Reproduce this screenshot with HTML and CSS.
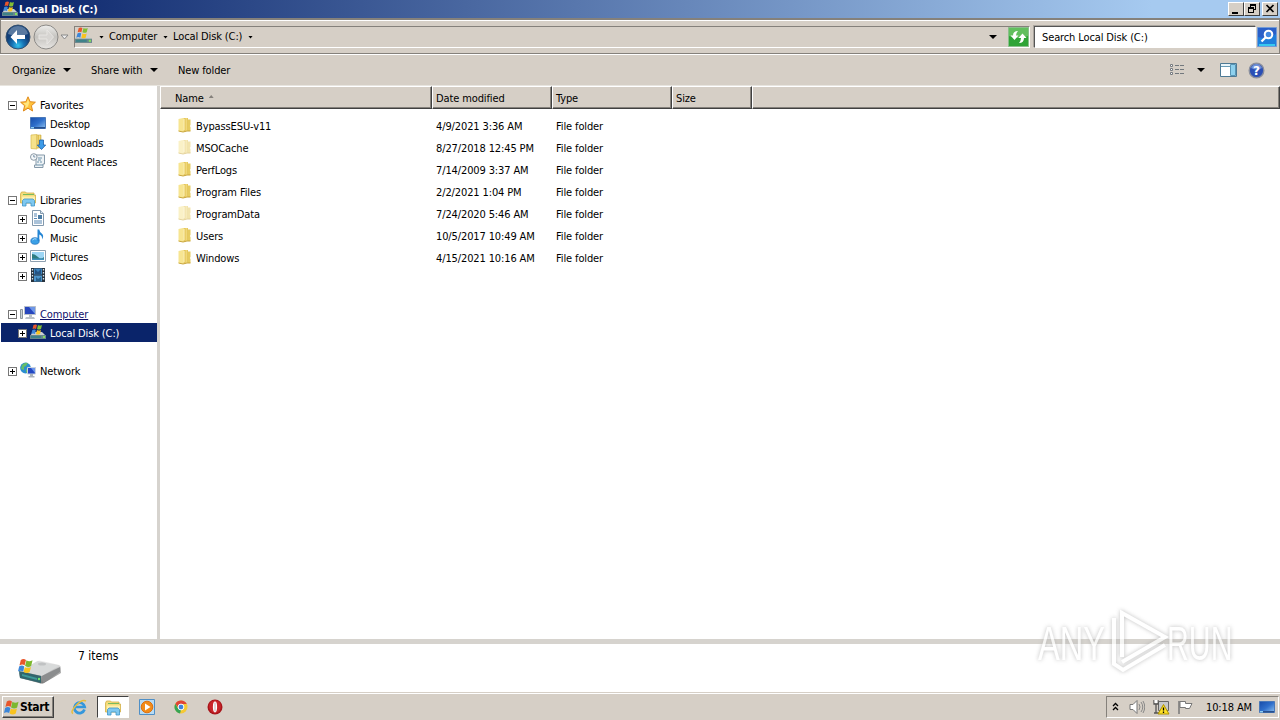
FILE: index.html
```html
<!DOCTYPE html>
<html lang="en">
<head>
    <meta charset="UTF-8">
    <title>Local Disk (C:)</title>
    <link rel="stylesheet" href="styles.css">
</head>
<body>
    <!-- shared icons -->
    <svg class="defs" width="0" height="0">
        <defs>
            <linearGradient id="gold" x2="1"><stop offset="0" stop-color="#f8e9a0"/><stop offset=".45" stop-color="#dcb63f"/><stop offset=".55" stop-color="#f7e48f"/><stop offset="1" stop-color="#e0c050"/></linearGradient>
            <linearGradient id="screen" x2="1" y2="1"><stop offset="0" stop-color="#174ba8"/><stop offset=".5" stop-color="#2f6fcb"/><stop offset="1" stop-color="#8fc2f0"/></linearGradient>
            <linearGradient id="metal" x2="0" y2="1"><stop offset="0" stop-color="#f2f2f2"/><stop offset="1" stop-color="#777"/></linearGradient>
            <radialGradient id="orb" cy=".85"><stop offset="0" stop-color="#35c4ee"/><stop offset=".5" stop-color="#1672b4"/><stop offset="1" stop-color="#123f78"/></radialGradient>
            <linearGradient id="orbOff" x2="0" y2="1"><stop offset="0" stop-color="#eeeeec"/><stop offset=".5" stop-color="#c5c3bf"/><stop offset="1" stop-color="#e8e6e3"/></linearGradient>
        </defs>
        <symbol id="flag" viewBox="0 0 16 16">
            <path d="M3 2q3-2 5.500 0L7 8Q5 6 1.500 8z" fill="#e8562a"/>
            <path d="M9 2.500q3 2 6.500 0L14 8.500q-3 2-6.500 0z" fill="#7cb82f"/>
            <path d="M1.200 9Q4 7 6.800 9l-1.300 5.500Q3 12.500 0 14.500z" fill="#3c86d8"/>
            <path d="M7.300 9.500q3 2 6.500 0L12.500 15q-3 2-6.500 0z" fill="#f9c31f"/>
        </symbol>
        <symbol id="drive" viewBox="0 0 16 16">
            <path d="M3 8h9l4 4H0z" fill="#c9cfd1"/>
            <path d="M0 11h16v4H0z" fill="#68868c"/>
            <path d="M1 12h10v2H1z" fill="#3d8289"/>
            <path d="M13 12h2v2h-2z" fill="#83df5c"/>
            <path d="M3.500 1q2-1 3.500 0L6 5Q4.500 4 2.500 5z" fill="#e8562a"/>
            <path d="M8 1q2 1 4 0l-1 4Q9 6 7 5z" fill="#83bf34"/>
            <path d="M2.300 6q2-1 3.500 0L5 10Q3 9 1.200 10z" fill="#3c86d8"/>
            <path d="M7 6q2 1 4 0l-1 4q-2 1-4 0z" fill="#f9c31f"/>
        </symbol>
        <symbol id="folder" viewBox="0 0 16 16">
            <path d="M1.500 2L6 1v14l-4.500-1z" fill="#f7e591"/>
            <path d="M6 1h5v12.500L6 15z" fill="url(#gold)"/>
            <path d="M11 2.500h2.500V8l-.7 1 .7 1v4H9.500l1.500-1z" fill="#e6cb60"/>
            <path d="M1.500 14L6 15l4-1h3.500" fill="none" stroke="#c9a53a"/>
            <path d="M7 2v11" stroke="#fff5bd"/>
        </symbol>
        <symbol id="star" viewBox="0 0 16 16">
            <path d="M8 .8l2.100 4.900 5.300.5-4 3.500 1.200 5.300L8 12.200 3.400 15l1.200-5.300-4-3.500 5.300-.5z" fill="#ffc23c" stroke="#e08a1c"/>
            <path d="M8 3l1.200 3.400-1.200 4-3 1.800.8-2.800L3 7l3.600-.3z" fill="#ffe680"/>
        </symbol>
        <symbol id="desktop" viewBox="0 0 16 16">
            <path d="M.5 2.500h15v11H.5z" fill="url(#screen)" stroke="#4a78b8"/>
            <path d="M1 12h14v1.500H1z" fill="#274f8d"/>
            <path d="M1 12h3v1.500H1z" fill="#8ccdf5"/>
        </symbol>
        <symbol id="downloads" viewBox="0 0 16 16">
            <path d="M1 1l6-.5V15l-6-.5z" fill="#f6e28b" stroke="#d7b94f" stroke-width=".7"/>
            <path d="M7 1h4v13H7z" fill="url(#gold)" stroke="#cfac42" stroke-width=".6"/>
            <path d="M9.500 6h4v5h2.200L11.500 15.500 7.300 11h2.200z" fill="#3c9be8" stroke="#1c5ea8" stroke-width=".8"/>
        </symbol>
        <symbol id="recent" viewBox="0 0 16 16">
            <path d="M5 2h9.500v9H13v3.500H4.500V12H6V5z" fill="#edf2f5" stroke="#8598a8"/>
            <path d="M8 5h4M8 7h3M7 9h2M10 9h2M6 12h7" stroke="#6f93ab"/>
            <circle cx="3.800" cy="4" r="3.300" fill="#f5f8fa" stroke="#8c9aa6"/>
            <path d="M3.800 2v2h1.500" fill="none" stroke="#587894" stroke-width=".8"/>
        </symbol>
        <symbol id="libraries" viewBox="0 0 16 16">
            <path d="M.5 3l1-2h4l1 1h7.500v2h1.500v8H.5z" fill="#f5dc7b" stroke="#d2ae49" stroke-width=".8"/>
            <path d="M3 3.500h11" stroke="#78bb60"/>
            <path d="M2 5.500h13v4H2z" fill="#fff0ad"/>
            <path d="M2.500 15V9.500L4 8h9l1.500 1.500V15h-3.500v-3H6v3z" fill="#7fc8f0" stroke="#3f94c8" stroke-width=".8"/>
        </symbol>
        <symbol id="documents" viewBox="0 0 16 16">
            <path d="M2.500.5h8l3 3v12h-11z" fill="#fff" stroke="#8399ad"/>
            <path d="M10.500.5v3h3" fill="#dce8f2" stroke="#8399ad"/>
            <path d="M4 4h3M4 6h3M4 8.500h3M4 11h8M4 13h8" stroke="#5686b3"/>
            <path d="M8 5h4v4H8z" fill="#4c7da5"/>
        </symbol>
        <symbol id="music" viewBox="0 0 16 16">
            <ellipse cx="5" cy="12" rx="4.200" ry="3.300" fill="#3ba0e6" stroke="#1c6db8" stroke-width=".7"/>
            <path d="M7.500 12V.5h1.700q.5 3 3 4.500 2 2-.2 5.500Q12.500 6.500 9.300 5.500V12z" fill="#2586d4"/>
            <path d="M2.500 11q1.500-2 4-1" stroke="#b0e0ff" fill="none"/>
        </symbol>
        <symbol id="pictures" viewBox="0 0 16 16">
            <path d="M.5 2.500h15v11H.5z" fill="#fff" stroke="#8ea0b0"/>
            <path d="M2 4h12v8H2z" fill="#9dd6f5"/>
            <path d="M2 6q3 0 6 3t6 0v3H2z" fill="#2e7d80"/>
            <path d="M2 10.500h12V12H2z" fill="#4092bf"/>
        </symbol>
        <symbol id="videos" viewBox="0 0 16 16">
            <path d="M1 1h14v14H1z" fill="#27333f"/>
            <path d="M4 1.500h8v6H4z" fill="#3b83be"/><path d="M4 8.500h8v6H4z" fill="#4d95cb"/>
            <path d="M5 2l3 3 3-3v5H5z" fill="#245382"/><path d="M6 10l2 2 3-2v4H6z" fill="#26618d"/>
            <path d="M2.500 2v12M13.500 2v12" stroke="#dbe8ef" stroke-width="1.300" stroke-dasharray="1.500 1.500"/>
        </symbol>
        <symbol id="computer" viewBox="0 0 16 16">
            <path d="M.5 4.500h2v9h-2z" fill="#ccd3d8" stroke="#8b959c"/>
            <path d="M4.500 1.500h11v8h-11z" fill="#2746bd" stroke="#b7bfca"/>
            <path d="M9 2h6v7z" fill="#6d96e8"/>
            <path d="M9 10h3v2H9zM6 12h8l1 2H5z" fill="#bac1c8"/>
        </symbol>
        <symbol id="network" viewBox="0 0 16 16">
            <circle cx="5.500" cy="6" r="5.400" fill="#2b8ed0"/>
            <path d="M2 3q3-3 6-2L6 4 4 5v3L1 7zM6 7l3 1-3 3z" fill="#65bd68"/>
            <path d="M7.500 5.500h8v6.500h-8z" fill="#2348c3" stroke="#cad2de"/>
            <path d="M11 6h4v5z" fill="#6b95eb"/>
            <path d="M10 12h3v2h-3zM8.500 14h6v1.500h-6z" fill="#a9b2bb"/>
        </symbol>
    </svg>

    <div class="window">
        <div class="titlebar">
            <svg class="icon"><use href="#drive"/></svg>
            <span class="title">Local Disk (C:)</span>
            <div class="controls">
                <button><svg width="14" height="12"><path d="M3 9h6v2H3z"/></svg></button>
                <button><svg width="14" height="12"><path d="M5 1h6v6H9V6h1V3H6v1H5zM3 4h6v6H3zM4 6v3h4V6z" fill-rule="evenodd"/></svg></button>
                <button class="close"><svg width="14" height="12"><path d="M3.500 2l7 7M10.500 2l-7 7" stroke="#000" stroke-width="1.700"/></svg></button>
            </div>
        </div>

        <div class="addressbar">
            <svg class="orb" viewBox="0 0 26 26">
                <circle cx="13" cy="13" r="12" fill="url(#orb)" stroke="#36516e"/>
                <path d="M3 10q2-8 10-8t10 8q-10 4-20 0z" fill="#fff" opacity=".3"/>
                <path d="M12 6L5.500 13l6.500 7v-5h8v-4h-8z" fill="#fff"/>
            </svg>
            <svg class="orb" viewBox="0 0 26 26">
                <circle cx="13" cy="13" r="12" fill="url(#orbOff)" stroke="#8c8a87"/>
                <path d="M14 6l6.500 7-6.500 7v-5H6v-4h8z" fill="#d7d5d2" stroke="#e8e6e3"/>
            </svg>
            <svg class="history" width="9" height="6"><path d="M1 1h7L4.500 5z" fill="#eee" stroke="#888"/></svg>
            <div class="breadcrumb">
                <svg class="drive"><use href="#drive"/></svg>
                <i class="caret small"></i><span class="crumb-computer">Computer</span>
                <i class="caret small"></i><span class="crumb-disk">Local Disk (C:)</span>
                <i class="caret small"></i>
                <i class="caret dropdown"></i>
                <svg class="refresh" viewBox="0 0 21 20">
                    <path d="M.5.5h20v19H.5z" fill="#2fa436" stroke="#8bbf8c"/>
                    <path d="M1 1h19v8q-9 4-19 0z" fill="#62bf5e"/>
                    <path d="M6.500 13L2.500 8.500H5Q5 4 10 4 8 6 8 8.500h2.500zM14.500 6.500l4 4.500H16q0 5-5 5 2-2.500 2-5h-2.500z" fill="#fff"/>
                </svg>
            </div>
            <div class="search">Search Local Disk (C:)</div>
            <svg class="search-button" viewBox="0 0 20 20">
                <path d="M.5.5h19v19H.5z" fill="#2a5fc8" stroke="#739bd5"/>
                <path d="M1 10q9 3 18-3v12H1z" fill="#1f7fdc"/>
                <path d="M2 17h16v2H2z" fill="#39c8ef"/>
                <circle cx="11.500" cy="7.500" r="3.800" fill="#4388e0" stroke="#fff" stroke-width="2"/>
                <path d="M8.500 10.500L4.500 14.500" stroke="#fff" stroke-width="2.300"/>
            </svg>
        </div>

        <div class="toolbar">
            <span class="organize">Organize</span><i class="caret"></i>
            <span class="share">Share with</span><i class="caret"></i>
            <span class="new">New folder</span>
            <div class="view-tools">
                <svg width="16" height="14"><path d="M1.500 1.500h2v2h-2zM1.500 5.500h2v2h-2zM1.500 9.500h2v2h-2z" fill="#fff" stroke="#777b80"/><path d="M6 2.500h4M11 2.500h4M6 6.500h4M11 6.500h4M6 10.500h4M11 10.500h4" stroke="#72787d"/></svg>
                <i class="caret"></i>
                <svg class="preview" width="17" height="14"><path d="M.5.5h16v13H.5z" fill="#fff" stroke="#4d7994"/><path d="M1 1h15v3H1z" fill="#e9f5fa"/><path d="M1 3.500h9" stroke="#679bb6"/><path d="M10.500 1.500h5v11h-5z" fill="#8ed1ee" stroke="#5795b5"/></svg>
                <svg class="help" width="17" height="17" viewBox="0 0 17 17"><circle cx="8.500" cy="8.500" r="7.300" fill="#2b4fb5" stroke="#8a8f9e" stroke-width="1.400"/><path d="M3 6q2-4 5.500-4T14 6q-5 3-11 0z" fill="#6f90d8"/><text x="8.500" y="13" text-anchor="middle">?</text></svg>
            </div>
        </div>

        <div class="main">
            <div class="tree">
                <div class="node"><i class="box minus"></i><svg><use href="#star"/></svg><span>Favorites</span></div>
                <div class="node child leaf"><svg><use href="#desktop"/></svg><span>Desktop</span></div>
                <div class="node child leaf"><svg><use href="#downloads"/></svg><span>Downloads</span></div>
                <div class="node child leaf"><svg><use href="#recent"/></svg><span>Recent Places</span></div>
                <div class="node group"><i class="box minus"></i><svg><use href="#libraries"/></svg><span>Libraries</span></div>
                <div class="node child"><i class="box"></i><svg><use href="#documents"/></svg><span>Documents</span></div>
                <div class="node child"><i class="box"></i><svg><use href="#music"/></svg><span>Music</span></div>
                <div class="node child"><i class="box"></i><svg><use href="#pictures"/></svg><span>Pictures</span></div>
                <div class="node child"><i class="box"></i><svg><use href="#videos"/></svg><span>Videos</span></div>
                <div class="node group"><i class="box minus"></i><svg><use href="#computer"/></svg><span class="link">Computer</span></div>
                <div class="node child selected"><i class="box"></i><svg><use href="#drive"/></svg><span>Local Disk (C:)</span></div>
                <div class="node group"><i class="box"></i><svg><use href="#network"/></svg><span>Network</span></div>
            </div>

            <div class="files">
                <div class="row head">
                    <div class="cell name">Name<i class="sort"></i></div>
                    <div class="cell">Date modified</div>
                    <div class="cell">Type</div>
                    <div class="cell">Size</div>
                    <div class="cell"></div>
                </div>
                <div class="list">
                    <div class="row"><div class="name"><svg><use href="#folder"/></svg>BypassESU-v11</div><div>4/9/2021 3:36 AM</div><div>File folder</div></div>
                    <div class="row hidden"><div class="name"><svg><use href="#folder"/></svg>MSOCache</div><div>8/27/2018 12:45 PM</div><div>File folder</div></div>
                    <div class="row"><div class="name"><svg><use href="#folder"/></svg>PerfLogs</div><div>7/14/2009 3:37 AM</div><div>File folder</div></div>
                    <div class="row"><div class="name"><svg><use href="#folder"/></svg>Program Files</div><div>2/2/2021 1:04 PM</div><div>File folder</div></div>
                    <div class="row hidden"><div class="name"><svg><use href="#folder"/></svg>ProgramData</div><div>7/24/2020 5:46 AM</div><div>File folder</div></div>
                    <div class="row"><div class="name"><svg><use href="#folder"/></svg>Users</div><div>10/5/2017 10:49 AM</div><div>File folder</div></div>
                    <div class="row"><div class="name"><svg><use href="#folder"/></svg>Windows</div><div>4/15/2021 10:16 AM</div><div>File folder</div></div>
                </div>
            </div>
        </div>

        <div class="details">
            <svg width="46" height="30" viewBox="0 0 46 30">
                <path d="M2 17L20 5q2-1 5 0l17 4q2 1 2 3v5L27 27q-2 1-5 0L3 22z" fill="url(#metal)"/>
                <path d="M3 15L21 5l21 5-17 10z" fill="#d8dada"/>
                <path d="M2 15l22 5v7L3 22z" fill="#31666d"/>
                <path d="M5 18l15 4v2L5 20z" fill="#3d9a99"/>
                <circle cx="22" cy="23" r="1.200" fill="#6fe870"/>
                <path d="M25 20l18-9v5L26 27z" fill="#8b8d8e"/>
                <ellipse cx="25" cy="8" rx="4" ry="1.500" fill="#c0c2c3"/>
                <use href="#flag" x="1" y="2" width="15" height="15"/>
            </svg>
            <span>7 items</span>
        </div>
    </div>

    <div class="taskbar">
        <div class="start"><svg><use href="#flag"/></svg><span>Start</span></div>
        <div class="quick">
            <svg class="app" viewBox="0 0 16 16"><path d="M13.500 10.500A5.200 5.200 0 1 1 13.700 8H4" fill="none" stroke="#3497dc" stroke-width="2.700"/><path d="M2 14.500Q-1 13 5 6.500T15 2" fill="none" stroke="#e7bd3e" stroke-width="1.500"/></svg>
            <div class="active"><svg viewBox="0 0 16 16"><use href="#libraries"/></svg></div>
            <svg class="app player" viewBox="0 0 16 16"><path d="M.5.5h15v15H.5z" fill="#b8dbf3" stroke="#4f8fc6"/><circle cx="8" cy="8" r="5.800" fill="#f28b18" stroke="#dd7010"/><path d="M6 4.500v7L11.500 8z" fill="#fff"/></svg>
            <svg class="app chrome" viewBox="0 0 16 16"><circle cx="8" cy="8" r="6.500" fill="#f5c934"/><path d="M2.400 4.700A6.500 6.500 0 0 1 13.800 5H8a3 3 0 0 0-2.700 4z" fill="#e04436"/><path d="M2.400 4.700L5.300 10 8 11l-1 3.500A6.500 6.500 0 0 1 2.400 4.700z" fill="#36a455"/><circle cx="8" cy="8" r="2.900" fill="#3d82dd" stroke="#fff"/></svg>
            <svg class="app opera" viewBox="0 0 16 16"><circle cx="8" cy="8" r="7.500" fill="#a9151a"/><ellipse cx="8" cy="7.500" rx="6" ry="6.300" fill="#c9262a"/><ellipse cx="8" cy="8" rx="2.100" ry="5.400" fill="#fff"/><path d="M8 3.500v9" stroke="#c8b0b0"/></svg>
        </div>
        <div class="tray">
            <svg class="more" width="8" height="10"><path d="M1 4l2.500-2.500L6 4M1 8l2.500-2.500L6 8" fill="none" stroke="#000" stroke-width="1.300"/></svg>
            <svg class="volume" width="16" height="14"><path d="M1 4.500h3l4-4v13l-4-4H1z" fill="#fff" stroke="#777"/><path d="M10 4q2 3 0 6M12 2q3.500 5 0 10M14 1q3.500 6 0 12" fill="none" stroke="#888"/></svg>
            <svg class="lan" width="17" height="16"><path d="M5.500 2.500h10v9h-10z" fill="#c6c8ca" stroke="#666"/><path d="M1 1v4h4V1M3 5v9M1 14h5" fill="none" stroke="#555" stroke-width="1.300"/><path d="M1.500 1v3h3V1z" fill="#fff"/><path d="M10.500 5.500l5.500 9.500H5z" fill="#ffe126" stroke="#ae9300"/><path d="M10.500 8.500v3M10.500 12.500v1.500" stroke="#000" stroke-width="1.300"/></svg>
            <svg class="action" width="16" height="15"><path d="M2 1v13" stroke="#777" stroke-width="1.500"/><path d="M3 1.500h5.500v2H15L12.500 8.500h-4v-1H3z" fill="#fff" stroke="#777"/></svg>
            <span>10:18 AM</span>
            <svg class="show"><use href="#desktop"/></svg>
        </div>
    </div>

    <svg class="watermark" width="220" height="80" viewBox="0 0 220 80">
        <text transform="translate(3 54) scale(.68 1)">ANY</text>
        <path d="M87 51V7l43 24-43 25M79 12v46l9 6 42-25"/>
        <text transform="translate(132 54) scale(.63 1)">RUN</text>
    </svg>
</body>
</html>
```
FILE: styles.css
```css
* {
    box-sizing: border-box;
}
body {
    margin: 0;
    width: 1280px;
    height: 720px;
    overflow: hidden;
    background: #d4d0c8;
    color: #000;
    font: 11px/14px "DejaVu Sans Condensed", "DejaVu Sans", sans-serif;
    letter-spacing: -0.12px;
    white-space: nowrap;
}
svg {
    display: block;
    flex: none;
}
.defs {
    position: absolute;
}
.window {
    display: flex;
    flex-direction: column;
    height: 692px;
    background: #d6cfc6;
}
.titlebar {
    display: flex;
    align-items: center;
    height: 18px;
    padding: 0 2px 0 2px;
    background: linear-gradient(90deg, #0a246a, #a6caf0 90%);
    color: #fff;
}
.titlebar .icon {
    width: 16px;
    height: 16px;
}
.title {
    flex: 1;
    padding: 1px 0 0 1px;
    font-weight: bold;
    letter-spacing: -0.1px;
}
.controls {
    display: flex;
}
.controls button {
    width: 16px;
    height: 14px;
    padding: 0;
    background: #d6cfc6;
    border: 1px solid;
    border-color: #fff #404040 #404040 #fff;
}
.controls .close {
    margin-left: 2px;
}

/* address bar */
.addressbar {
    display: flex;
    align-items: center;
    height: 36px;
    padding: 1px 2px 0 4px;
    border-top: 2px solid #85817b;
    border-bottom: 1px solid #85817b;
    border-right: 1px solid #85817b;
    border-left: 1px solid #85817b;
    box-shadow: inset 0 1px #fff;
}
.orb {
    width: 26px;
    height: 26px;
    margin-right: 2px;
}
.history {
    margin: 0 5px 0 -1px;
}
.breadcrumb {
    display: flex;
    align-items: center;
    width: 956px;
    height: 22px;
    border: 1px solid;
    border-color: #85817b #fff #fff #85817b;
}
.breadcrumb .drive {
    width: 17px;
    height: 17px;
    margin: -3px 7px 0 0;
}
.caret {
    flex: none;
    width: 8px;
    height: 4px;
    background: #000;
    clip-path: polygon(0 0, 100% 0, 50% 100%);
}
.caret.small {
    width: 5px;
    height: 3px;
}
.crumb-computer {
    width: 59px;
    padding-left: 5px;
}
.crumb-disk {
    width: 80px;
    padding-left: 5px;
}
.dropdown {
    margin-left: auto;
    margin-right: 11px;
}
.refresh {
    width: 21px;
    height: 20px;
}
.search {
    width: 222px;
    height: 22px;
    margin-left: 4px;
    padding: 4px 7px;
    background: #fff;
    border: 1px solid;
    border-color: #555 #fff #fff #555;
    box-shadow: -1px -1px #aaa59e;
}
.search-button {
    width: 20px;
    height: 20px;
    margin-left: 1px;
}

/* command bar */
.toolbar {
    display: flex;
    align-items: center;
    height: 32px;
    padding: 0 15px 0 12px;
    border-top: 1px solid #fff;
    border-bottom: 1px solid #e8e5df;
}
.toolbar span {
    padding-top: 1px;
}
.organize {
    width: 51px;
}
.share {
    width: 59px;
    margin-left: 20px;
}
.new {
    margin-left: 20px;
}
.view-tools {
    display: flex;
    align-items: center;
    margin-left: auto;
}
.view-tools .caret {
    margin-left: 12px;
}
.preview {
    margin-left: 15px;
}
.help {
    margin-left: 11px;
}
.help text {
    fill: #fff;
    font: bold 12px "DejaVu Sans", sans-serif;
}

.main {
    display: flex;
    flex: 1;
    background: #fff;
}

/* navigation tree */
.tree {
    width: 160px;
    padding: 9px 0 0 1px;
    border-right: 3px solid #d6d3ce;
}
.node {
    display: flex;
    align-items: center;
    height: 19px;
    padding-left: 7px;
}
.node svg {
    width: 16px;
    height: 16px;
    margin: -2px 4px 0 3px;
}
.node span {
    padding-top: 2px;
}
.child {
    padding-left: 17px;
}
.leaf {
    padding-left: 26px;
}
.group {
    margin-top: 19px;
}
.box {
    width: 9px;
    height: 9px;
    margin-top: 2px;
    border: 1px solid #777;
    background: linear-gradient(#000, #000) center / 5px 1px no-repeat,
        linear-gradient(#000, #000) center / 1px 5px no-repeat,
        #fff;
}
.box.minus {
    background: linear-gradient(#000, #000) center / 5px 1px no-repeat, #fff;
}
.link {
    color: #10106b;
    text-decoration: underline;
}
.selected {
    background: #0a246a;
    color: #fff;
}

/* file list */
.files {
    flex: 1;
}
.row {
    display: grid;
    grid-template-columns: 272px 120px 120px 80px 1fr;
    align-items: center;
    height: 22px;
}
.head {
    height: 23px;
}
.cell {
    display: flex;
    align-items: center;
    height: 100%;
    padding: 2px 0 0 3px;
    background: #d6cfc6;
    border-top: 1px solid #fff;
    border-left: 1px solid #fff;
    border-right: 1px solid #404040;
    border-bottom: 1px solid #404040;
    box-shadow: inset -1px -1px #85817b;
}
.cell.name {
    padding-left: 14px;
}
.sort {
    width: 5px;
    height: 3px;
    margin: -4px 0 0 5px;
    background: #85817b;
    clip-path: polygon(50% 0, 100% 100%, 0 100%);
}
.list {
    padding-top: 7px;
}
.list .row > div {
    padding-left: 4px;
}
.list .name {
    display: flex;
    align-items: center;
}
.list .row > .name {
    padding-left: 17px;
}
.list svg {
    width: 16px;
    height: 16px;
    margin: -4px 3px 0 0;
}
.hidden svg {
    opacity: 0.5;
}

.details {
    display: flex;
    height: 53px;
    border-top: 5px solid #d6d3ce;
    background: #fff;
}
.details svg {
    margin: 12px 15px 0 17px;
}
.details span {
    padding-top: 5px;
    font-size: 12px;
    letter-spacing: 0;
}

/* taskbar */
.taskbar {
    display: flex;
    height: 28px;
    padding: 3px 0 2px 2px;
    background: #d6cfc6;
    border-top: 1px solid #d6cfc6;
    box-shadow: inset 0 1px #fff;
}
.start {
    display: flex;
    align-items: center;
    width: 52px;
    height: 22px;
    border: 1px solid;
    border-color: #fff #404040 #404040 #fff;
    box-shadow: inset -1px -1px #85817b;
    font-size: 12px;
    font-weight: bold;
    letter-spacing: -0.3px;
}
.start svg {
    width: 15px;
    height: 16px;
    margin: 0 1px;
}
.quick {
    display: flex;
    align-items: center;
    margin-left: 17px;
}
.app {
    width: 16px;
    height: 16px;
}
.active {
    width: 32px;
    height: 22px;
    margin: 0 10px 0 10px;
    padding: 3px 7px;
    background: #fff;
    border: 1px solid;
    border-color: #404040 #fff #fff #404040;
}
.active svg {
    width: 16px;
    height: 16px;
}
.chrome,
.opera {
    margin-left: 18px;
}
.tray {
    display: flex;
    align-items: center;
    width: 173px;
    height: 22px;
    margin-left: auto;
    margin-right: 1px;
    padding-left: 5px;
    border: 1px solid;
    border-color: #85817b #fff #fff #85817b;
}
.volume {
    margin-left: 9px;
}
.lan {
    margin-left: 8px;
}
.action {
    margin-left: 7px;
}
.tray span {
    width: 47px;
    margin-left: 13px;
    padding-top: 1px;
}
.show {
    width: 16px;
    height: 16px;
    margin-left: 6px;
}

/* logo over the lower right corner */
.watermark {
    position: absolute;
    left: 1035px;
    top: 606px;
    fill: none;
    stroke: #fff;
    stroke-width: 4px;
    opacity: 0.75;
    filter: drop-shadow(0 0 2px #aaa);
}
.watermark text {
    font: 48px "Liberation Sans", sans-serif;
    fill: #fff;
    stroke: none;
    letter-spacing: 0;
}
```
